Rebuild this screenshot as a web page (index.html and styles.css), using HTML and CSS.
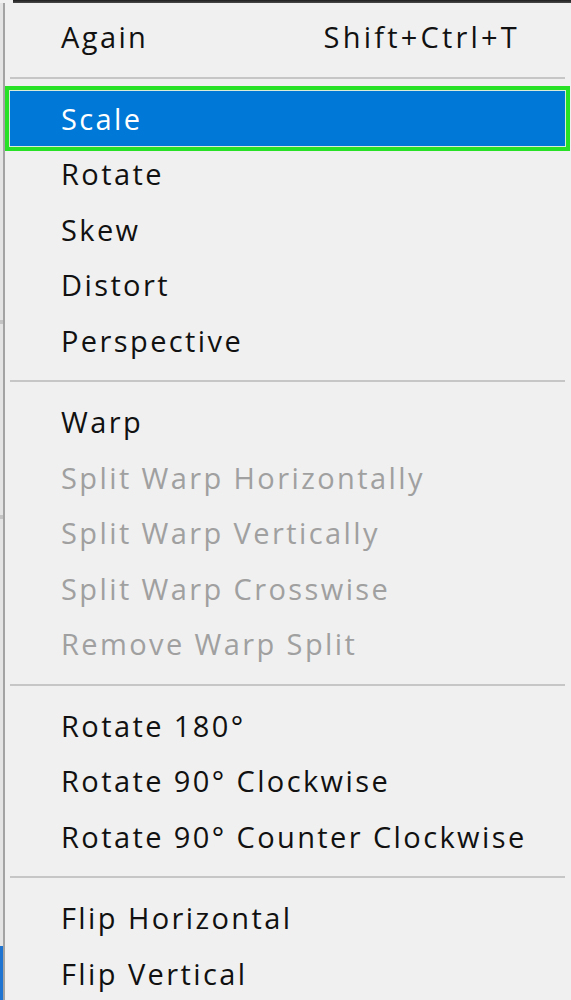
FILE: index.html
```html
<!DOCTYPE html>
<html>
<head>
<meta charset="utf-8">
<link rel="stylesheet" href="styles.css">
</head>
<body>
<div class="screen">
  <div class="top-edge"></div>
  <div class="frame">
    <div class="backdrop">
      <div class="tick tick-a"></div>
      <div class="tick tick-b"></div>
      <div class="backdrop-blue"></div>
    </div>
    <div class="menu">
      <div class="item"><span class="label">Again</span><span class="shortcut">Shift+Ctrl+T</span></div>
      <div class="sep"></div>
      <div class="item active"><span class="label">Scale</span></div>
      <div class="item"><span class="label">Rotate</span></div>
      <div class="item"><span class="label">Skew</span></div>
      <div class="item"><span class="label">Distort</span></div>
      <div class="item"><span class="label">Perspective</span></div>
      <div class="sep"></div>
      <div class="item"><span class="label">Warp</span></div>
      <div class="item disabled"><span class="label">Split Warp Horizontally</span></div>
      <div class="item disabled"><span class="label">Split Warp Vertically</span></div>
      <div class="item disabled"><span class="label">Split Warp Crosswise</span></div>
      <div class="item disabled"><span class="label">Remove Warp Split</span></div>
      <div class="sep"></div>
      <div class="item"><span class="label">Rotate 180°</span></div>
      <div class="item"><span class="label">Rotate 90° Clockwise</span></div>
      <div class="item"><span class="label">Rotate 90° Counter Clockwise</span></div>
      <div class="sep"></div>
      <div class="item"><span class="label">Flip Horizontal</span></div>
      <div class="item"><span class="label">Flip Vertical</span></div>
    </div>
  </div>
</div>
</body>
</html>
```

FILE: styles.css
```css
html, body {
  margin: 0;
  padding: 0;
  background: #f0f0f0;
}

.screen {
  width: 571px;
  height: 1000px;
  overflow: hidden;
  display: flex;
  flex-direction: column;
  background: #f0f0f0;
}

.top-edge {
  height: 3px;
  margin-left: 13px;
  flex: none;
  background: linear-gradient(#1e1e1e, #4a4a4a);
}

.frame {
  flex: 1;
  min-height: 0;
  display: flex;
  overflow: hidden;
}

.backdrop {
  width: 3px;
  flex: none;
  display: flex;
  flex-direction: column;
  background: #e4e4e4;
}

.tick {
  height: 4px;
  background: #c4c4c4;
}

.tick-a { margin-top: 317px; }
.tick-b { margin-top: 191px; }

.backdrop-blue {
  margin-top: auto;
  height: 54px;
  background: #1f74d2;
}

.menu {
  flex: 1;
  min-width: 0;
  border-left: 2px solid #a3a3a3;
  padding-top: 6.25px;
  font-family: "Open Sans", "Noto Sans", "DejaVu Sans", sans-serif;
  font-size: 29px;
  letter-spacing: 2.4px;
  color: #111;
}

.item {
  height: 55.5px;
  line-height: 55.5px;
  margin: 0 6px 0 5px;
  padding: 0 45px 0 51px;
  display: flex;
  white-space: nowrap;
}

.item .shortcut {
  margin-left: auto;
  letter-spacing: 3.2px;
}

.item.active {
  background: #0078d7;
  color: #fff;
  box-shadow: 0 0 0 1px #d8ecd8, 0 0 0 5px #27e127;
  position: relative;
}

.item.disabled {
  color: #a0a0a0;
}

.sep {
  height: 26px;
  margin: 0 6px 0 5px;
  display: flex;
  flex-direction: column;
  justify-content: center;
}

.sep::before {
  content: "";
  display: block;
  height: 2px;
  background: #c6c6c6;
}
```
